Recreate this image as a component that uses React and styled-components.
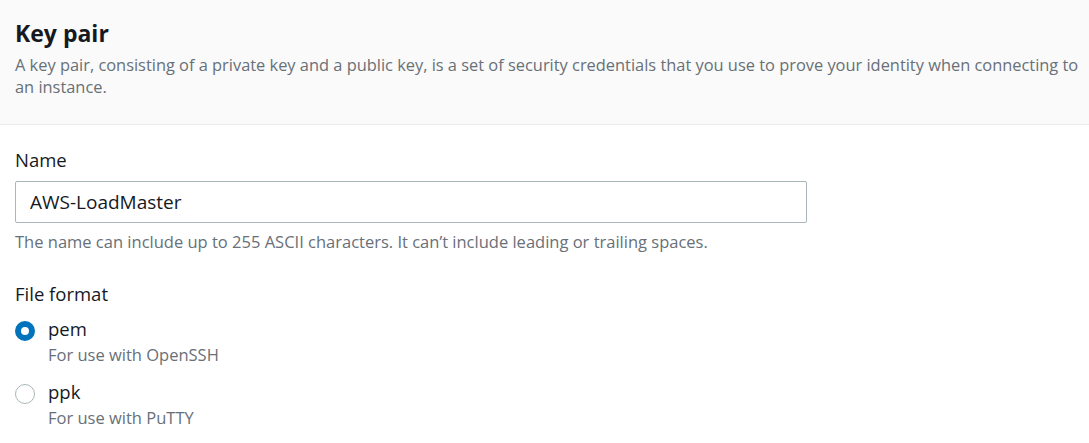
import React, { useState } from 'react'
import styled, { createGlobalStyle } from 'styled-components'

const GlobalStyle = createGlobalStyle`
  body {
    margin: 0;
    background: #ffffff;
    font-family: "Open Sans", "Noto Sans", Arial, sans-serif;
    color: #16191f;
  }
`

const options = [
  { value: 'pem', hint: 'For use with OpenSSH' },
  { value: 'ppk', hint: 'For use with PuTTY' },
]

const App = () => {
  const [format, setFormat] = useState('pem')

  return (
    <Page>
      <GlobalStyle />
      <Header>
        <Title>Key pair</Title>
        <Description>
          A key pair, consisting of a private key and a public key, is a set of security credentials that you use to prove your identity when connecting to an instance.
        </Description>
      </Header>

      <Body>
        <Field>
          <Label htmlFor="kp-name">Name</Label>
          <Input id="kp-name" defaultValue="AWS-LoadMaster" />
          <Hint>The name can include up to 255 ASCII characters. It can’t include leading or trailing spaces.</Hint>
        </Field>

        <Field>
          <Label as="div">File format</Label>
          <RadioGroup>
            {options.map((opt) => (
              <RadioRow key={opt.value} onClick={() => setFormat(opt.value)}>
                <RadioDot checked={format === opt.value} />
                <RadioText>
                  <RadioLabel>{opt.value}</RadioLabel>
                  <RadioHint>{opt.hint}</RadioHint>
                </RadioText>
              </RadioRow>
            ))}
          </RadioGroup>
        </Field>
      </Body>
    </Page>
  )
}

export default App

const Page = styled.div`
  width: 1089px;
  height: 443px;
  overflow: hidden;
  background: #fff;
`

const Header = styled.div`
  background: #fafafa;
  border-bottom: 1px solid #eaeded;
  padding: 18px 3px 0 15px;
  height: 125px;
  box-sizing: border-box;
`

const Title = styled.h2`
  margin: 0;
  font-size: 23px;
  font-weight: 700;
  line-height: 30px;
  color: #16191f;
`

const Description = styled.p`
  margin: 6px 0 0;
  font-size: 16.4px;
  line-height: 22px;
  color: #687078;
`

const Body = styled.div`
  padding: 23px 15px 0 15px;
  display: flex;
  flex-direction: column;
  gap: 29px;
`

const Field = styled.div`
  display: flex;
  flex-direction: column;
`

const Label = styled.label`
  font-size: 18.5px;
  line-height: 24px;
  color: #16191f;
  margin-bottom: 9px;
`

const Input = styled.input`
  width: 792px;
  height: 42px;
  box-sizing: border-box;
  border: 1px solid #aab7b8;
  border-radius: 2px;
  padding: 0 14px;
  font-family: inherit;
  font-size: 19px;
  color: #16191f;
  outline: none;
`

const Hint = styled.div`
  margin-top: 8px;
  font-size: 16.5px;
  line-height: 22px;
  color: #687078;
`

const RadioGroup = styled.div`
  display: flex;
  flex-direction: column;
  gap: 14px;
  margin-top: 2px;
`

const RadioRow = styled.div`
  display: flex;
  align-items: flex-start;
  gap: 13px;
  cursor: pointer;
`

const RadioDot = styled.span`
  flex: none;
  width: 20px;
  height: 20px;
  margin-top: 4px;
  box-sizing: border-box;
  border-radius: 50%;
  border: ${(p) => (p.checked ? '6.5px solid #0073bb' : '1.5px solid #aab7b8')};
  background: #fff;
`

const RadioText = styled.div`
  display: flex;
  flex-direction: column;
`

const RadioLabel = styled.span`
  font-size: 18.5px;
  line-height: 24px;
  color: #16191f;
`

const RadioHint = styled.span`
  margin-top: 3px;
  font-size: 16.5px;
  line-height: 22px;
  color: #687078;
`
